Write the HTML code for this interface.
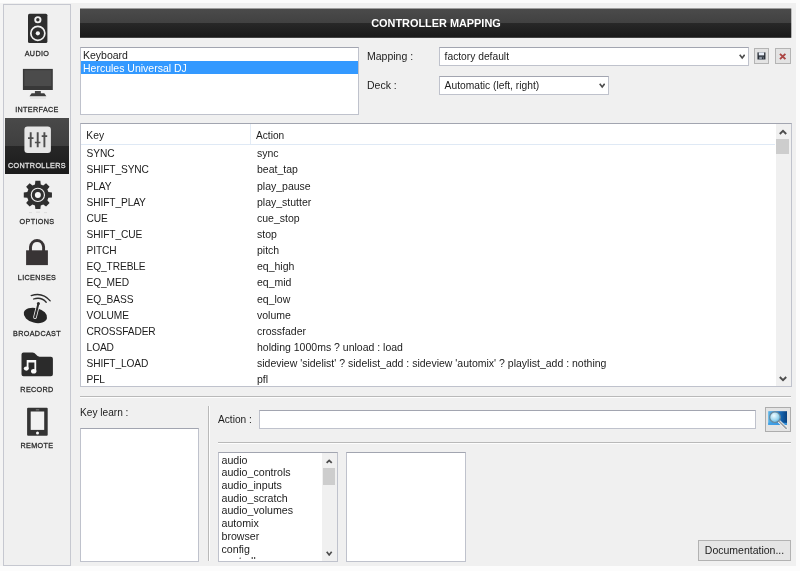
<!DOCTYPE html>
<html><head><meta charset="utf-8"><title>Controller Mapping</title>
<style>
*{box-sizing:border-box;margin:0;padding:0}
html,body{width:800px;height:571px;overflow:hidden;background:#fcfcfc;font-family:"Liberation Sans",Arial,sans-serif;font-size:10.5px;color:#1c1c1c}
.abs{position:absolute}
#main{left:0;top:3px;width:796px;height:563px;background:#f0f0f0;border-left:3px solid #f4f4f4}
#side{left:3px;top:4px;width:68px;height:562px;background:#f0f0f0;border:1px solid #c6c8d0}
.item{position:absolute;left:1px;width:64px;height:56px;text-align:center}
.item.sel{background:linear-gradient(#494949 0,#3f3f3f 50%,#272727 50%,#1b1b1b 100%)}
.item .lbl{position:absolute;left:-4px;right:-4px;top:43.1px;font-size:7.2px;letter-spacing:.36px;line-height:10px;color:#262626;white-space:nowrap;-webkit-text-stroke:.25px #262626;transform:scaleY(1.12)}
.item.sel .lbl{color:#e4e4e4;-webkit-text-stroke:.25px #e4e4e4}
.item svg{position:absolute;left:0;top:0}
#title{left:80px;top:8px;width:712px;height:30px;color:#fff;font-weight:bold;font-size:10.9px;text-align:center;line-height:31px}
.box{position:absolute;background:#fff;border:1px solid #bfc2cc;border-top-color:#a2a5b0;overflow:hidden}
.t{position:absolute;white-space:nowrap;line-height:13px}
.k{font-size:10.2px;letter-spacing:-.12px}
.c{font-size:10.25px}
.cl{font-size:10.65px}
.btn{position:absolute;background:#e3e3e3;border:1px solid #b4b4b4}
.hl{position:absolute;height:2px;border-top:1px solid #b9b9b9;border-bottom:1px solid #fdfdfd}
.vl{position:absolute;width:2px;border-left:1px solid #b9b9b9;border-right:1px solid #fdfdfd}
.sb{position:absolute;background:#f0f0f0}
.thumb{position:absolute;background:#cdcdcd}
</style></head><body>
<div id="root" style="position:absolute;left:0;top:0;width:800px;height:571px;will-change:transform">
<div id="main" class="abs"></div>
<div id="side" class="abs">
<div class="item" style="top:1px"><svg viewBox="0 0 64 56" width="64" height="56"><rect x="23" y="7.7" width="19.4" height="29.4" rx="1.6" fill="#2d2d2d"/>
<circle cx="32.85" cy="13.75" r="2.65" fill="#2d2d2d" stroke="#f0f0f0" stroke-width="1.9"/>
<circle cx="32.85" cy="27.3" r="7" fill="#2d2d2d" stroke="#f0f0f0" stroke-width="1.7"/>
<circle cx="32.85" cy="27.3" r="2.1" fill="#f6f6f6"/></svg><div class="lbl">AUDIO</div></div>
<div class="item" style="top:57px"><svg viewBox="0 0 64 56" width="64" height="56"><rect x="17.9" y="6.9" width="29.9" height="21.1" fill="#383838"/>
<rect x="19.3" y="8.2" width="27.1" height="15.8" fill="#4b4b4b"/>
<rect x="29.9" y="29" width="5.9" height="3" fill="#444"/>
<path d="M26.6 31.2 L39.3 31.2 L41.4 34.2 L24.5 34.2 Z" fill="#3c3c3c"/>
<rect x="25" y="35.2" width="16" height="1.6" fill="#d9d9d9" opacity=".6"/></svg><div class="lbl">INTERFACE</div></div>
<div class="item sel" style="top:113px"><svg viewBox="0 0 64 56" width="64" height="56"><rect x="19.4" y="8.6" width="26.5" height="26.4" rx="3.2" fill="#e6e6e6"/>
<g stroke="#e6e6e6" stroke-width="3.6"><path d="M22.6 20.1H28.9M29.5 24.5H35.8M36.3 18.2H42.6"/></g>
<g stroke="#4e4e4e" stroke-width="1.9">
<path d="M25.7 14.3V29.2M32.7 14.3V29.2M39.4 14.3V29.2"/>
<path d="M23 20.1H28.5M29.9 24.5H35.4M36.7 18.2H42.2" stroke-width="1.7"/>
</g></svg><div class="lbl">CONTROLLERS</div></div>
<div class="item" style="top:169px"><svg viewBox="0 0 64 56" width="64" height="56"><path d="M29.95 10.39L30.37 6.82 L35.35 6.82 L35.77 10.39A10.90 10.90 0 0 1 38.23 11.42L41.06 9.18 L44.58 12.70 L42.34 15.53A10.90 10.90 0 0 1 43.37 17.99L46.94 18.41 L46.94 23.39 L43.37 23.81A10.90 10.90 0 0 1 42.34 26.27L44.58 29.10 L41.06 32.62 L38.23 30.38A10.90 10.90 0 0 1 35.77 31.41L35.35 34.98 L30.37 34.98 L29.95 31.41A10.90 10.90 0 0 1 27.49 30.38L24.66 32.62 L21.14 29.10 L23.38 26.27A10.90 10.90 0 0 1 22.35 23.81L18.78 23.39 L18.78 18.41 L22.35 17.99A10.90 10.90 0 0 1 23.38 15.53L21.14 12.70 L24.66 9.18 L27.49 11.42A10.90 10.90 0 0 1 29.95 10.39 Z" fill="#2f2f2f"/>
<circle cx="32.86" cy="20.9" r="6.6" fill="none" stroke="#f0f0f0" stroke-width="1.1"/>
<circle cx="32.86" cy="20.9" r="3" fill="#f6f6f6"/>
<path d="M24 38.6H27M31 38.2H35M39 38.6H42" stroke="#dcdcdc" stroke-width="1"/></svg><div class="lbl">OPTIONS</div></div>
<div class="item" style="top:225px"><svg viewBox="0 0 64 56" width="64" height="56"><rect x="21.1" y="20.3" width="21.8" height="14.8" fill="#383435"/>
<path d="M25.5 21 V17 A6.6 7.4 0 0 1 38.6 17 V21" fill="none" stroke="#383435" stroke-width="2.9"/></svg><div class="lbl">LICENSES</div></div>
<div class="item" style="top:281px"><svg viewBox="0 0 64 56" width="64" height="56"><ellipse cx="30.4" cy="29.4" rx="11.9" ry="7.4" transform="rotate(14 30.4 29.4)" fill="#262626"/>
<path d="M30 31.2 L33.3 18" stroke="#f0f0f0" stroke-width="3.6" stroke-linecap="round"/>
<path d="M30 31.2 L33.3 18" stroke="#2c2c2c" stroke-width="2" stroke-linecap="round"/>
<circle cx="33.4" cy="17.6" r="1.5" fill="#2c2c2c"/>
<path d="M26.2 9.6 Q37.5 5.8 45.2 14.8" fill="none" stroke="#2c2c2c" stroke-width="1.3" stroke-linecap="round"/>
<path d="M28.6 13 Q36.2 10.6 41.2 16.2" fill="none" stroke="#2c2c2c" stroke-width="1.3" stroke-linecap="round"/></svg><div class="lbl">BROADCAST</div></div>
<div class="item" style="top:337px"><svg viewBox="0 0 64 56" width="64" height="56"><path d="M18.5 10.6 H27.5 Q29.5 10.6 31 12.6 Q32.4 14.7 34.5 14.7 H45.9 Q47.9 14.7 47.9 16.7 V32.3 Q47.9 34.3 45.9 34.3 H18.5 Q16.5 34.3 16.5 32.3 V12.6 Q16.5 10.6 18.5 10.6 Z" fill="#2b2b2b"/>
<path d="M21.7 17.9 H31.2 V28.8 H29.4 V20.6 H23.5 V26.2 H21.7 Z" fill="#fafafa"/>
<ellipse cx="21.3" cy="26.6" rx="2.5" ry="2.1" fill="#fafafa"/>
<ellipse cx="28.7" cy="29.2" rx="2.7" ry="2.3" fill="#fafafa"/></svg><div class="lbl">RECORD</div></div>
<div class="item" style="top:393px"><svg viewBox="0 0 64 56" width="64" height="56"><rect x="22.1" y="9.8" width="20.6" height="28" rx="1" fill="#343434"/>
<rect x="25.7" y="13.5" width="13.5" height="18.4" fill="#f2f2f2"/>
<circle cx="32.5" cy="35" r="1.5" fill="#fafafa"/>
<rect x="30.8" y="11.4" width="3.4" height="0.9" fill="#888"/></svg><div class="lbl">REMOTE</div></div>
</div>
<svg class="abs" style="left:80px;top:8px" width="712" height="30" viewBox="0 0 712 30"><defs><linearGradient id="tg" x1="0" y1="0" x2="0" y2="1"><stop offset="0" stop-color="#4b4b4b"/><stop offset="0.5" stop-color="#414141"/><stop offset="0.5" stop-color="#282828"/><stop offset="1" stop-color="#191919"/></linearGradient></defs><rect x="0" y="0.5" width="711.3" height="29.3" fill="url(#tg)"/></svg>
<div id="title" class="abs">CONTROLLER MAPPING</div>

<div class="box" style="left:80px;top:47px;width:279px;height:67.5px">
 <div class="t" style="left:2px;top:1px">Keyboard</div>
 <div class="abs" style="left:0;top:13px;width:277px;height:13px;background:#3399ff"></div>
 <div class="t" style="left:2px;top:13.5px;color:#fff">Hercules Universal DJ</div>
</div>

<div class="t" style="left:367px;top:49.5px">Mapping :</div>
<div class="t" style="left:367px;top:78.5px">Deck :</div>
<div class="box" style="left:439px;top:47px;width:310px;height:19px">
 <div class="t c" style="left:4.6px;top:2px">factory default</div>
 <svg class="abs" style="left:299px;top:6.3px" width="6.4" height="5.6" viewBox="0 0 8 7"><path d="M0.9 1 L4 4.9 L7.1 1" fill="none" stroke="#4c4c4c" stroke-width="2.1"/></svg>
</div>
<div class="box" style="left:439px;top:76px;width:170px;height:18.6px">
 <div class="t c" style="left:4.6px;top:2px">Automatic (left, right)</div>
 <svg class="abs" style="left:159px;top:6.3px" width="6.4" height="5.6" viewBox="0 0 8 7"><path d="M0.9 1 L4 4.9 L7.1 1" fill="none" stroke="#4c4c4c" stroke-width="2.1"/></svg>
</div>
<div class="btn" style="left:754px;top:48.3px;width:15.3px;height:15.3px">
<svg class="abs" style="left:2.2px;top:2.8px" width="8.9" height="7.9" viewBox="0 0 10 10" preserveAspectRatio="none"><rect x="0.5" y="0.5" width="9" height="9" fill="#2a3038"/><rect x="2" y="0.5" width="6" height="3.8" fill="#e8eef8"/><rect x="2.5" y="6" width="5" height="3.5" fill="#8d96a3"/><rect x="5.5" y="6.6" width="1.5" height="2.4" fill="#2a3038"/></svg>
</div>
<div class="btn" style="left:775.3px;top:48.3px;width:15.3px;height:15.3px">
<svg class="abs" style="left:3.2px;top:3.4px" width="7.4" height="7" viewBox="0 0 9 9" preserveAspectRatio="none"><path d="M1.2 1.2 L7.8 7.8 M7.8 1.2 L1.2 7.8" stroke="#ab4543" stroke-width="2.3"/></svg>
</div>

<div class="box" style="left:80px;top:123px;width:711.5px;height:264px"></div>
<div class="abs" style="left:81px;top:144px;width:694px;height:1px;background:#dfe9f5"></div>
<div class="abs" style="left:250px;top:124px;width:1px;height:20px;background:#e3ebf5"></div>
<div class="t" style="left:86.3px;top:129px;font-size:10.3px">Key</div>
<div class="t" style="left:256px;top:129px;font-size:10.15px">Action</div>
<div class="t k" style="left:86.6px;top:147.20px">SYNC</div><div class="t" style="left:257px;top:147.20px">sync</div>
<div class="t k" style="left:86.6px;top:163.35px">SHIFT_SYNC</div><div class="t" style="left:257px;top:163.35px">beat_tap</div>
<div class="t k" style="left:86.6px;top:179.50px">PLAY</div><div class="t" style="left:257px;top:179.50px">play_pause</div>
<div class="t k" style="left:86.6px;top:195.65px">SHIFT_PLAY</div><div class="t" style="left:257px;top:195.65px">play_stutter</div>
<div class="t k" style="left:86.6px;top:211.80px">CUE</div><div class="t" style="left:257px;top:211.80px">cue_stop</div>
<div class="t k" style="left:86.6px;top:227.95px">SHIFT_CUE</div><div class="t" style="left:257px;top:227.95px">stop</div>
<div class="t k" style="left:86.6px;top:244.10px">PITCH</div><div class="t" style="left:257px;top:244.10px">pitch</div>
<div class="t k" style="left:86.6px;top:260.25px">EQ_TREBLE</div><div class="t" style="left:257px;top:260.25px">eq_high</div>
<div class="t k" style="left:86.6px;top:276.40px">EQ_MED</div><div class="t" style="left:257px;top:276.40px">eq_mid</div>
<div class="t k" style="left:86.6px;top:292.55px">EQ_BASS</div><div class="t" style="left:257px;top:292.55px">eq_low</div>
<div class="t k" style="left:86.6px;top:308.70px">VOLUME</div><div class="t" style="left:257px;top:308.70px">volume</div>
<div class="t k" style="left:86.6px;top:324.85px">CROSSFADER</div><div class="t" style="left:257px;top:324.85px">crossfader</div>
<div class="t k" style="left:86.6px;top:341.00px">LOAD</div><div class="t" style="left:257px;top:341.00px">holding 1000ms ? unload : load</div>
<div class="t k" style="left:86.6px;top:357.15px">SHIFT_LOAD</div><div class="t" style="left:257px;top:357.15px">sideview 'sidelist' ? sidelist_add : sideview 'automix' ? playlist_add : nothing</div>
<div class="t k" style="left:86.6px;top:373.30px">PFL</div><div class="t" style="left:257px;top:373.30px">pfl</div>
<div class="sb" style="left:776px;top:124px;width:15px;height:262px">
 <svg class="abs" style="left:2.7px;top:5.4px" width="8" height="6" viewBox="0 0 8 6"><path d="M0.8 5 L4 1.8 L7.2 5" fill="none" stroke="#4c4c4c" stroke-width="1.9"/></svg>
 <div class="thumb" style="left:0;top:15px;width:13px;height:15px"></div>
 <svg class="abs" style="left:2.9px;top:251.9px" width="8" height="6" viewBox="0 0 8 6"><path d="M0.8 1 L4 4.2 L7.2 1" fill="none" stroke="#4c4c4c" stroke-width="1.9"/></svg>
</div>

<div class="hl" style="left:80px;top:396px;width:710.5px"></div>
<div class="t" style="left:80px;top:405.5px;font-size:10.15px">Key learn :</div>
<div class="box" style="left:80px;top:428px;width:119px;height:133.5px"></div>
<div class="vl" style="left:207.5px;top:406px;height:155px"></div>
<div class="t" style="left:218px;top:412.5px;font-size:10.15px">Action :</div>
<div class="box" style="left:259px;top:409.5px;width:497px;height:19.5px"></div>
<div class="btn" style="left:765px;top:407px;width:26px;height:25.4px;background:#e4e4e4;border-color:#adadad">
<svg class="abs" style="left:0;top:0" width="24" height="23" viewBox="0 0 24 23">
<defs><linearGradient id="sg" x1="0" y1="0" x2="1" y2="0"><stop offset="0" stop-color="#5ab6ea"/><stop offset="0.55" stop-color="#1b74c4"/><stop offset="1" stop-color="#08407f"/></linearGradient>
<radialGradient id="lg" cx="0.4" cy="0.35" r="0.7"><stop offset="0" stop-color="#f2fbff"/><stop offset="0.6" stop-color="#9fd8f0"/><stop offset="1" stop-color="#4fa9dc"/></radialGradient></defs>
<rect x="2.2" y="3.2" width="18.8" height="13.8" fill="url(#sg)"/>
<rect x="2.2" y="14.8" width="18.8" height="2.2" fill="#3f9fe6" opacity=".85"/>
<path d="M13 13.3 L20.2 20.4" stroke="#f4f4f4" stroke-width="3.2" stroke-linecap="round"/>
<path d="M13 13.3 L20.2 20.4" stroke="#9a9fa4" stroke-width="1.6" stroke-linecap="round"/>
<circle cx="9" cy="9.2" r="5.3" fill="url(#lg)" stroke="#6d8798" stroke-width="1.2"/>
</svg>
</div>
<div class="hl" style="left:218px;top:442px;width:572.5px"></div>

<div class="box" style="left:217.8px;top:452px;width:120.2px;height:109.5px"><div class="abs" style="left:0;top:0;width:104px;height:106.4px;overflow:hidden">
<div class="t cl" style="left:2.7px;top:0.50px">audio</div>
<div class="t cl" style="left:2.7px;top:13.24px">audio_controls</div>
<div class="t cl" style="left:2.7px;top:25.98px">audio_inputs</div>
<div class="t cl" style="left:2.7px;top:38.72px">audio_scratch</div>
<div class="t cl" style="left:2.7px;top:51.46px">audio_volumes</div>
<div class="t cl" style="left:2.7px;top:64.20px">automix</div>
<div class="t cl" style="left:2.7px;top:76.94px">browser</div>
<div class="t cl" style="left:2.7px;top:89.68px">config</div>
<div class="t cl" style="left:2.7px;top:102.42px">controllers</div></div>
 <div class="sb" style="left:103.4px;top:0;width:14.8px;height:107.5px">
  <svg class="abs" style="left:4.2px;top:6.2px" width="6.4" height="4.8" viewBox="0 0 8 6"><path d="M0.8 5 L4 1.8 L7.2 5" fill="none" stroke="#4c4c4c" stroke-width="2.2"/></svg>
  <div class="thumb" style="left:0.5px;top:15px;width:12.6px;height:17px"></div>
  <svg class="abs" style="left:4.2px;top:97.6px" width="6.4" height="5.6" viewBox="0 0 8 7"><path d="M0.9 1 L4 4.9 L7.1 1" fill="none" stroke="#4c4c4c" stroke-width="2.1"/></svg>
 </div>
</div>
<div class="box" style="left:346px;top:452px;width:119.5px;height:109.5px"></div>

<div class="btn" style="left:698px;top:540px;width:93px;height:21px;text-align:center;line-height:19px;background:#e5e5e5;border-color:#b2b2b2">Documentation...</div>
</div>
</body></html>
